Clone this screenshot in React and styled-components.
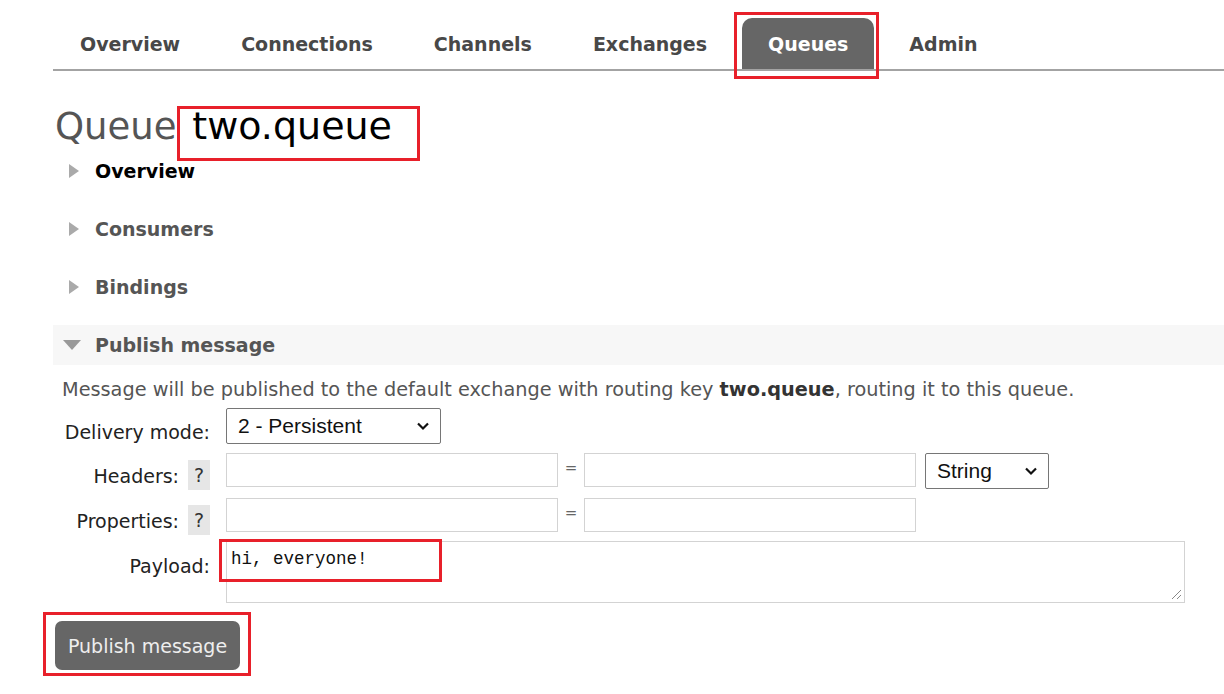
import styled, { createGlobalStyle } from "styled-components"

const GlobalStyle = createGlobalStyle`
  body {
    margin: 0;
    background: #fff;
    font-family: "DejaVu Sans", Verdana, sans-serif;
    color: #333;
  }
`

const Page = styled.div`
  position: relative;
  width: 1224px;
  height: 694px;
  overflow: hidden;
  padding-left: 53px;
  box-sizing: border-box;
`

const Nav = styled.ul`
  list-style: none;
  margin: 0;
  padding: 18px 0 0 1px;
  display: flex;
  border-bottom: 2px solid #a3a3a3;
`

const Tab = styled.li`
  height: 51px;
  padding: 0 26px;
  margin-right: 9px;
  display: flex;
  align-items: center;
  font-size: 19px;
  font-weight: bold;
  color: ${(p) => (p.$active ? "#fff" : "#484848")};
  background: ${(p) => (p.$active ? "#666" : "transparent")};
  border-radius: 10px 10px 0 0;
`

const Heading = styled.h1`
  margin: 30px 0 0 2px;
  height: 50px;
  line-height: 50px;
  font-size: 37px;
  font-weight: normal;
  color: #555;
  b {
    font-weight: normal;
    font-size: 38px;
    margin-left: 4px;
    color: #000;
  }
`

const Section = styled.div`
  height: 40px;
  margin-bottom: 18px;
  display: flex;
  align-items: center;
  padding-left: ${(p) => (p.$open ? "10px" : "16px")};
  background: ${(p) => (p.$open ? "#f7f7f7" : "transparent")};
  font-size: 19px;
  font-weight: bold;
  color: ${(p) => (p.$dark ? "#000" : "#555")};
`

const ArrowRight = styled.span`
  width: 0;
  height: 0;
  border-top: 7px solid transparent;
  border-bottom: 7px solid transparent;
  border-left: 10px solid #aaa;
  margin-right: 16px;
`

const ArrowDown = styled.span`
  width: 0;
  height: 0;
  border-left: 9px solid transparent;
  border-right: 9px solid transparent;
  border-top: 10px solid #999;
  margin-right: 14px;
`

const Body = styled.div`
  margin-top: -4px;
  padding-left: 9px;
`

const Note = styled.p`
  margin: 0 0 7px;
  font-size: 19.3px;
  line-height: 22px;
  color: #555;
  b {
    color: #333;
  }
`

const Form = styled.div`
  display: grid;
  grid-template-columns: 148px 1fr;
  column-gap: 16px;
  row-gap: 9px;
`

const Label = styled.div`
  display: flex;
  justify-content: flex-end;
  align-items: flex-start;
  gap: 9px;
  height: 22px;
  padding-top: ${(p) => p.$top || "12px"};
  font-size: 19px;
  line-height: 22px;
  color: #222;
  white-space: nowrap;
`

const Help = styled.span`
  width: 22px;
  height: 30px;
  margin-top: -5px;
  background: #e6e6e6;
  display: flex;
  align-items: center;
  justify-content: center;
  color: #333;
`

const Fields = styled.div`
  display: flex;
  align-items: flex-start;
`

const Select = styled.div`
  width: ${(p) => p.$w};
  height: 36px;
  box-sizing: border-box;
  border: 1px solid #767676;
  border-radius: 2px;
  display: flex;
  align-items: center;
  justify-content: space-between;
  padding: 0 10px 0 11px;
  font-family: "Liberation Sans", Arial, sans-serif;
  font-size: 21px;
  color: #111;
  margin-left: ${(p) => p.$ml || "0"};
`

const Input = styled.div`
  width: 332px;
  height: 34px;
  box-sizing: border-box;
  border: 1px solid #d3d3d3;
`

const Eq = styled.span`
  width: 26px;
  text-align: center;
  line-height: 30px;
  font-size: 15px;
  color: #666;
`

const TextArea = styled.div`
  position: relative;
  width: 959px;
  height: 62px;
  box-sizing: border-box;
  border: 1px solid #d3d3d3;
  padding: 7px 4px;
  font-family: "Liberation Mono", "Courier New", monospace;
  font-size: 17.5px;
  color: #111;
`

const Grip = styled.svg`
  position: absolute;
  right: 2px;
  bottom: 2px;
`

const Button = styled.div`
  margin: 18px 0 0 -7px;
  width: 185px;
  height: 49px;
  border-radius: 7px;
  background: #666;
  color: #eee;
  display: flex;
  align-items: center;
  justify-content: center;
  font-size: 19px;
`

const Mark = styled.div`
  position: absolute;
  border: 3px solid #e8202a;
  box-sizing: border-box;
  pointer-events: none;
`

const Chevron = () => (
  <svg width="14" height="10" viewBox="0 0 14 10">
    <path d="M2 2.5 L7 7.5 L12 2.5" fill="none" stroke="#111" strokeWidth="2.2" />
  </svg>
)

const tabs = ["Overview", "Connections", "Channels", "Exchanges", "Queues", "Admin"]

export default function App() {
  return (
    <>
      <GlobalStyle />
      <Page>
        <Nav>
          {tabs.map((t) => (
            <Tab key={t} $active={t === "Queues"}>{t}</Tab>
          ))}
        </Nav>

        <Heading>Queue <b>two.queue</b></Heading>

        <Section $dark><ArrowRight />Overview</Section>
        <Section><ArrowRight />Consumers</Section>
        <Section><ArrowRight />Bindings</Section>
        <Section $open><ArrowDown />Publish message</Section>

        <Body>
          <Note>
            Message will be published to the default exchange with routing key <b>two.queue</b>, routing it to this queue.
          </Note>
          <Form>
            <Label $top="13px">Delivery mode:</Label>
            <Fields>
              <Select $w="215px">2 - Persistent<Chevron /></Select>
            </Fields>

            <Label>Headers:<Help>?</Help></Label>
            <Fields>
              <Input />
              <Eq>=</Eq>
              <Input />
              <Select $w="124px" $ml="9px">String<Chevron /></Select>
            </Fields>

            <Label>Properties:<Help>?</Help></Label>
            <Fields>
              <Input />
              <Eq>=</Eq>
              <Input />
            </Fields>

            <Label $top="14px">Payload:</Label>
            <Fields>
              <TextArea>
                hi, everyone!
                <Grip width="12" height="12" viewBox="0 0 12 12">
                  <path d="M11 2 L2 11 M11 7 L7 11" stroke="#888" strokeWidth="1" />
                </Grip>
              </TextArea>
            </Fields>
          </Form>
          <Button>Publish message</Button>
        </Body>

        <Mark style={{ left: 734, top: 12, width: 145, height: 67 }} />
        <Mark style={{ left: 177, top: 106, width: 243, height: 55 }} />
        <Mark style={{ left: 219, top: 539, width: 223, height: 43 }} />
        <Mark style={{ left: 43, top: 612, width: 208, height: 64 }} />
      </Page>
    </>
  )
}
